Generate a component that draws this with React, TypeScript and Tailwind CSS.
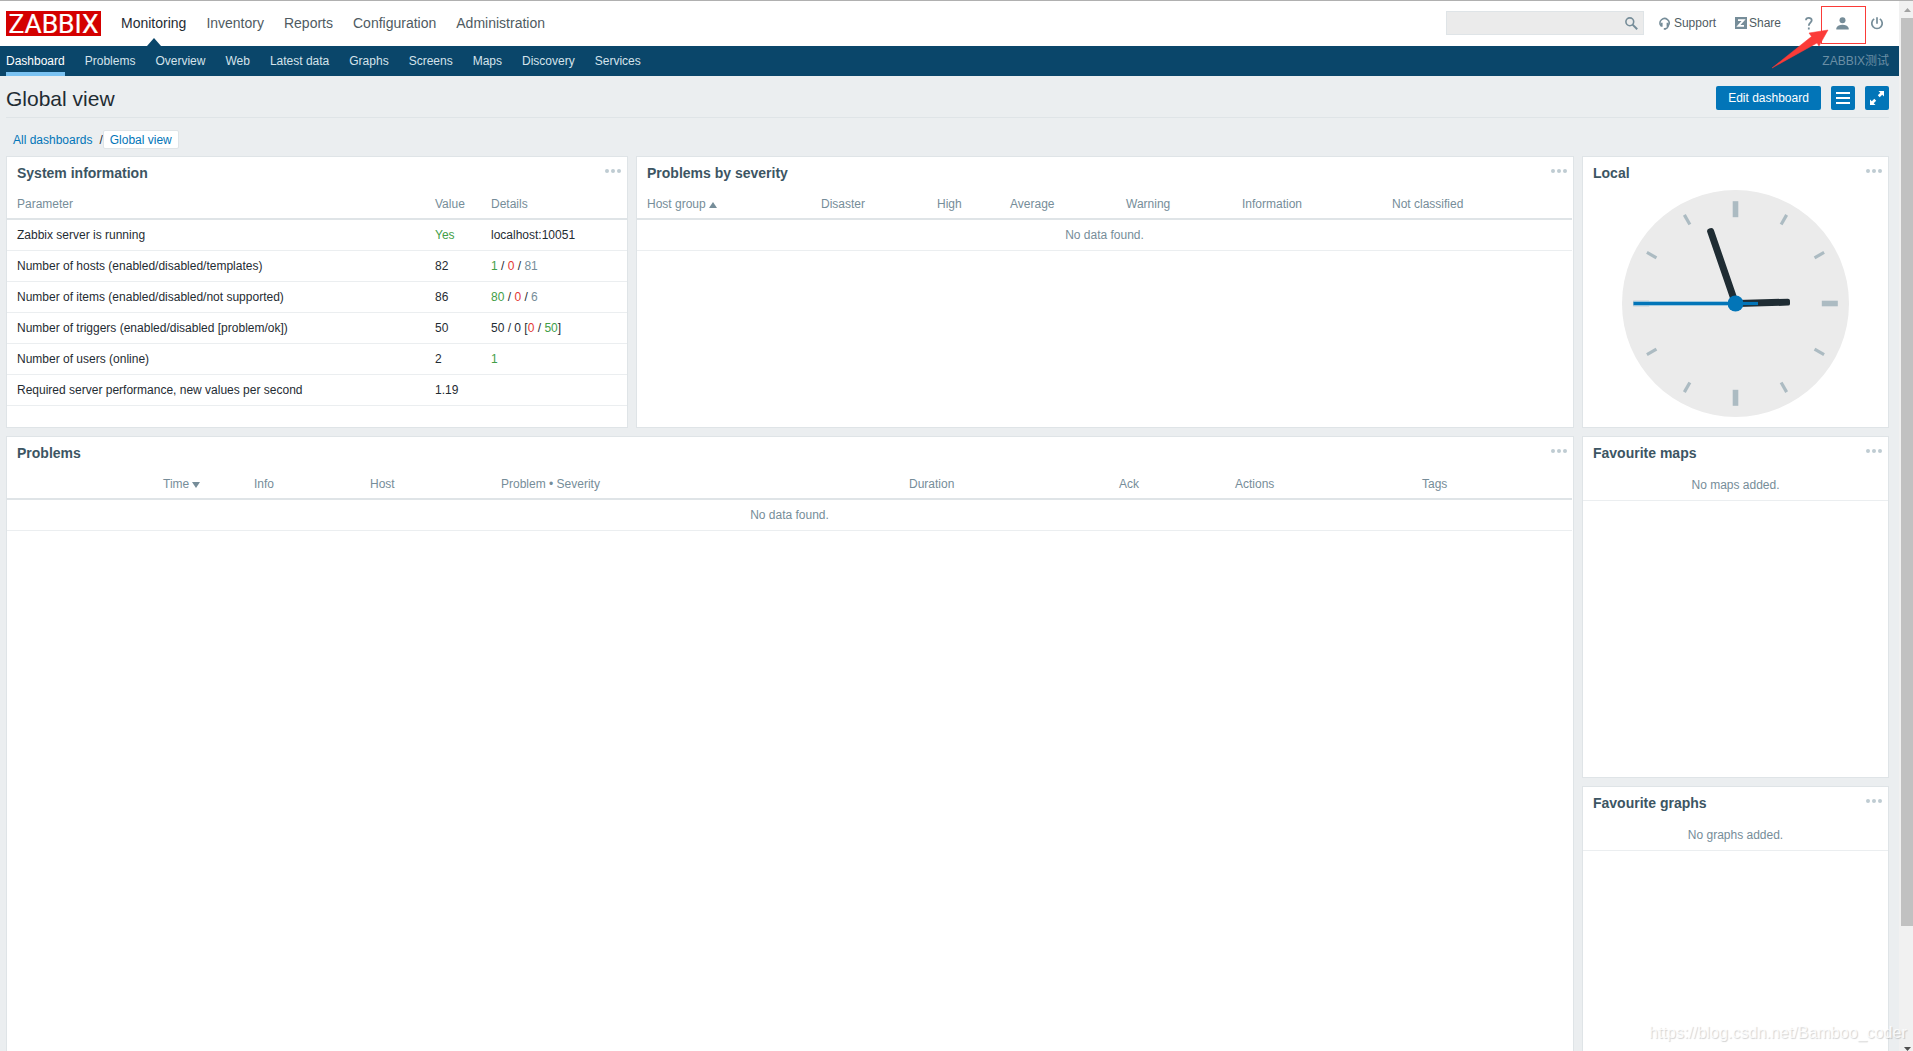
import type { ReactNode } from "react";

const mainMenu = ["Monitoring", "Inventory", "Reports", "Configuration", "Administration"];

const subMenu = [
  "Dashboard",
  "Problems",
  "Overview",
  "Web",
  "Latest data",
  "Graphs",
  "Screens",
  "Maps",
  "Discovery",
  "Services",
];

const Green = ({ children }: { children: ReactNode }) => <span className="text-[#429e47]">{children}</span>;
const Red = ({ children }: { children: ReactNode }) => <span className="text-[#e33734]">{children}</span>;
const Grey = ({ children }: { children: ReactNode }) => <span className="text-[#768d99]">{children}</span>;

const systemInfo: { name: string; value: ReactNode; details: ReactNode }[] = [
  { name: "Zabbix server is running", value: <Green>Yes</Green>, details: "localhost:10051" },
  {
    name: "Number of hosts (enabled/disabled/templates)",
    value: "82",
    details: <><Green>1</Green> / <Red>0</Red> / <Grey>81</Grey></>,
  },
  {
    name: "Number of items (enabled/disabled/not supported)",
    value: "86",
    details: <><Green>80</Green> / <Red>0</Red> / <Grey>6</Grey></>,
  },
  {
    name: "Number of triggers (enabled/disabled [problem/ok])",
    value: "50",
    details: <>50 / 0 [<Red>0</Red> / <Green>50</Green>]</>,
  },
  { name: "Number of users (online)", value: "2", details: <Green>1</Green> },
  { name: "Required server performance, new values per second", value: "1.19", details: "" },
];

const Widget = ({ title, className = "", children }: { title: string; className?: string; children: ReactNode }) => (
  <section className={`flex flex-col border border-[#dfe4e7] bg-white ${className}`}>
    <div className="flex h-[31px] shrink-0 items-start justify-between pl-[10px] pr-1.5">
      <h4 className="mt-[6px] text-sm font-bold leading-[20px] text-[#3c5563]">{title}</h4>
      <svg className="mt-3" width="16" height="4" fill="#bfccd2">
        <circle cx="2" cy="2" r="2" />
        <circle cx="8" cy="2" r="2" />
        <circle cx="14" cy="2" r="2" />
      </svg>
    </div>
    {children}
  </section>
);

const NoData = ({ text = "No data found." }: { text?: string }) => (
  <div className="h-[31px] border-b border-[#ebeef0] text-center leading-[30px] text-[#768d99]">{text}</div>
);

const Clock = () => (
  <svg className="mx-auto mt-[2px]" width="227" height="227" viewBox="-113.5 -113.5 227 227">
    <circle r="113.5" fill="#ebebeb" />
    {[0, 30, 60, 90, 120, 150, 180, 210, 240, 270, 300, 330].map((deg) =>
      deg % 90 === 0 ? (
        <rect key={deg} x="-2.8" y="-102.3" width="5.6" height="16" fill="#acbbc2" transform={`rotate(${deg})`} />
      ) : (
        <rect key={deg} x="-1.6" y="-102.3" width="3.2" height="11" fill="#acbbc2" transform={`rotate(${deg})`} />
      )
    )}
    <rect x="-3.5" y="-54.5" width="7" height="54.5" rx="2" fill="#1f2c33" transform="rotate(88.5)" />
    <rect x="-3.5" y="-79.5" width="7" height="80" rx="3" fill="#1f2c33" transform="rotate(-19)" />
    <rect x="-102" y="-2.4" width="94" height="4.8" fill="#acd0e4" />
    <rect x="-102" y="-1.6" width="124.5" height="3.2" fill="#0275b8" />
    <circle r="8" fill="#0275b8" />
  </svg>
);

const Header = () => (
  <header className="flex h-[45px] shrink-0 items-center bg-white pl-1.5">
    <svg width="95" height="25" className="overflow-visible">
      <rect width="95" height="25" fill="#d40000" />
      <text
        x="2.5"
        y="21.5"
        textLength="90"
        lengthAdjust="spacingAndGlyphs"
        fill="#fff"
        stroke="#fff"
        strokeWidth="0.2"
        fontSize="25"
        fontFamily="Roboto, sans-serif"
      >
        ZABBIX
      </text>
    </svg>
    <nav className="ml-5 flex h-full gap-5 text-sm leading-[44px] text-[#4f5b62]">
      {mainMenu.map((item, i) => (
        <a key={item} className={`relative ${i === 0 ? "text-[#1f2c33]" : ""}`}>
          {item}
          {i === 0 && (
            <svg className="absolute bottom-0 left-1/2 -translate-x-1/2" width="14" height="8">
              <path d="M7 0 14 8H0z" fill="#0a466a" />
            </svg>
          )}
        </a>
      ))}
    </nav>
    <div className="ml-auto flex items-center pb-px pr-[16px] text-[#4f5b62]">
      <div className="flex h-6 w-[198px] items-center justify-end border border-[#dfe4e7] bg-[#ebebeb] pr-[5px]">
        <svg width="13" height="13" viewBox="0 0 13 13" fill="none" stroke="#768d99" strokeWidth="1.6">
          <circle cx="4.8" cy="4.8" r="3.9" />
          <path d="m7.6 7.6 4.6 4.6" strokeWidth="2" />
        </svg>
      </div>
      <a className="ml-[15px] flex items-center gap-1">
        <svg width="11" height="13" viewBox="0 0 11 13" fill="none" stroke="#768d99">
          <path d="M2 8.8A4.5 4.5 0 1 1 9.3 8.6Q8.6 11.6 6 11.8" strokeWidth="1.5" />
          <path d="M2.6 5.8v4M8.6 5.8v4" strokeWidth="2" />
          <path d="M4.8 11.9h2" strokeWidth="1.8" />
        </svg>
        Support
      </a>
      <a className="ml-[19px] flex items-center gap-0.5">
        <svg width="12" height="12">
          <rect width="12" height="12" fill="#768d99" />
          <path d="M3 3.2h5.6L3.4 8.8H9" fill="none" stroke="#fff" strokeWidth="1.8" />
        </svg>
        Share
      </a>
      <svg className="ml-[24px]" width="8" height="13" viewBox="0 0 8 13" fill="none" stroke="#768d99" strokeWidth="1.8">
        <path d="M1 3.3C1 .2 6.7.1 6.7 3.3 6.7 5.6 3.8 5.6 3.8 8.7M3.8 10.5v2" />
      </svg>
      <svg className="ml-[23px]" width="13" height="13" viewBox="0 0 13 13" fill="#768d99">
        <circle cx="6.5" cy="3.2" r="3" />
        <path d="M.3 12.4v-1.5Q2 7.8 6.5 7.8t6.2 3.1v1.5z" />
      </svg>
      <svg className="ml-[22px]" width="12" height="13" viewBox="0 0 12 13" fill="none" stroke="#768d99" strokeWidth="1.7">
        <path d="M3.2 1.9A5.2 5.2 0 1 0 8.8 1.9M6 .3v6.4" />
      </svg>
    </div>
  </header>
);

const Scrollbar = () => (
  <div className="flex w-[14px] flex-col bg-[#f1f1f1]">
    <svg width="14" height="17">
      <path d="M8.5 7 12 11H5z" fill="#a3a3a3" />
    </svg>
    <div className="ml-0.5 h-[908px] bg-[#c1c1c1]" />
    <svg className="mt-auto" width="14" height="5">
      <path d="M5 1h7L8.5 5z" fill="#505050" />
    </svg>
  </div>
);

export default function App() {
  return (
    <div className="relative flex h-[1051px] w-[1913px] overflow-hidden border-t border-[#b0b0b0] bg-[#ebeef0] font-['Liberation_Sans','Noto_Sans_CJK_SC',sans-serif] text-xs text-[#1f2c33]">
      <div className="flex w-[1899px] flex-col">
        <Header />

        <div className="flex h-[30px] shrink-0 justify-between bg-[#0a466a] pl-1.5 pr-[10px] leading-[30px]">
          <nav className="flex gap-[20px] text-[#d5e3eb]">
            {subMenu.map((item, i) => (
              <a key={item} className={i === 0 ? "border-b-4 border-[#7ac2f2] text-white" : ""}>
                {item}
              </a>
            ))}
          </nav>
          <span className="text-[#6b8fa5]">ZABBIX测试</span>
        </div>

        <div className="ml-1.5 mr-[10px] flex h-[42px] shrink-0 items-start border-b border-[#dfe4e7]">
          <h1 className="mt-[9px] text-[21px] leading-7">Global view</h1>
          <div className="ml-auto mt-[10px] flex gap-[10px]">
            <button className="h-6 w-[105px] rounded-[2px] bg-[#0275b8] text-white">Edit dashboard</button>
            <button className="flex h-6 w-6 items-center justify-center rounded-[2px] bg-[#0275b8]">
              <svg width="14" height="12" stroke="#fff" strokeWidth="2">
                <path d="M0 1h14M0 6h14M0 11h14" />
              </svg>
            </button>
            <button className="flex h-6 w-6 items-center justify-center rounded-[2px] bg-[#0275b8]">
              <svg width="14" height="14" fill="#fff">
                <path d="M8.5 0H14v5.5L12.2 3.7 9.7 6.2 7.8 4.3 10.3 1.8zM5.5 14H0V8.5L1.8 10.3 4.3 7.8 6.2 9.7 3.7 12.2z" />
              </svg>
            </button>
          </div>
        </div>

        <div className="ml-[13px] mt-3 flex h-[19px] shrink-0 items-center text-[#0275b8]">
          <span>All dashboards</span>
          <span className="ml-[7px] text-[#1f2c33]">/</span>
          <span className="flex h-[19px] items-center rounded-[2px] border border-[#dfe4e7] bg-white px-1.5">
            Global view
          </span>
        </div>

        {/* Dashboard grid */}
        <main className="ml-1.5 mt-[7px] flex gap-2">
          <div className="flex w-[1568px] flex-col gap-2">
            <div className="flex h-[272px] gap-2">
              <Widget title="System information" className="w-[622px]">
                <div className="grid h-8 grid-cols-[418px_56px_1fr] border-b-2 border-[#dfe4e7] pl-[10px] leading-8 text-[#768d99]">
                  <span>Parameter</span>
                  <span>Value</span>
                  <span>Details</span>
                </div>
                {systemInfo.map((row) => (
                  <div
                    key={row.name}
                    className="grid h-[31px] grid-cols-[418px_56px_1fr] border-b border-[#ebeef0] pl-[10px] leading-[30px]"
                  >
                    <span>{row.name}</span>
                    <span>{row.value}</span>
                    <span>{row.details}</span>
                  </div>
                ))}
              </Widget>

              <Widget title="Problems by severity" className="w-[938px]">
                <div className="mr-px">
                  <div className="grid h-8 grid-cols-[174px_116px_73px_116px_116px_150px_1fr] border-b-2 border-[#dfe4e7] pl-[10px] leading-8 text-[#768d99]">
                    <span className="flex items-center gap-[3px]">
                      Host group
                      <svg className="mt-px" width="8" height="6">
                        <path d="M4 0 8 6H0z" fill="#768d99" />
                      </svg>
                    </span>
                    <span>Disaster</span>
                    <span>High</span>
                    <span>Average</span>
                    <span>Warning</span>
                    <span>Information</span>
                    <span>Not classified</span>
                  </div>
                  <NoData />
                </div>
              </Widget>
            </div>

            <Widget title="Problems" className="h-[700px]">
              <div className="mr-px">
                <div className="grid h-8 grid-cols-[91px_116px_131px_408px_210px_116px_187px_1fr] border-b-2 border-[#dfe4e7] pl-[156px] leading-8 text-[#768d99]">
                  <span className="flex items-center gap-[3px]">
                    Time
                    <svg className="mt-px" width="8" height="6">
                      <path d="M0 0h8L4 6z" fill="#768d99" />
                    </svg>
                  </span>
                  <span>Info</span>
                  <span>Host</span>
                  <span>Problem • Severity</span>
                  <span>Duration</span>
                  <span>Ack</span>
                  <span>Actions</span>
                  <span>Tags</span>
                </div>
                <NoData />
              </div>
            </Widget>
          </div>

          <div className="flex w-[307px] flex-col gap-2">
            <Widget title="Local" className="h-[272px]">
              <Clock />
            </Widget>
            <Widget title="Favourite maps" className="h-[342px]">
              <div className="pt-0.5">
                <NoData text="No maps added." />
              </div>
            </Widget>
            <Widget title="Favourite graphs" className="h-[342px]">
              <div className="pt-0.5">
                <NoData text="No graphs added." />
              </div>
            </Widget>
          </div>
        </main>
      </div>

      <Scrollbar />

      {/* Highlight around the user profile icon */}
      <div className="absolute left-[1821px] top-[5px] h-[38px] w-[45px] border border-[#fb3b38]" />
      <svg className="absolute left-[1770px] top-[27px]" width="60" height="42">
        <path
          d="M2 40 41.5 8.5 39 5 58 2 49 18 47 15z"
          fill="#fb3b38"
          stroke="#fb3b38"
          strokeWidth="0.5"
          strokeLinejoin="round"
        />
      </svg>

      <div className="absolute bottom-[7px] left-[1649px] text-base leading-[22px] tracking-[0.05px] text-white/80 [text-shadow:1px_1px_1px_rgba(0,0,0,0.18)]">
        https://blog.csdn.net/Bamboo_coder
      </div>
    </div>
  );
}
